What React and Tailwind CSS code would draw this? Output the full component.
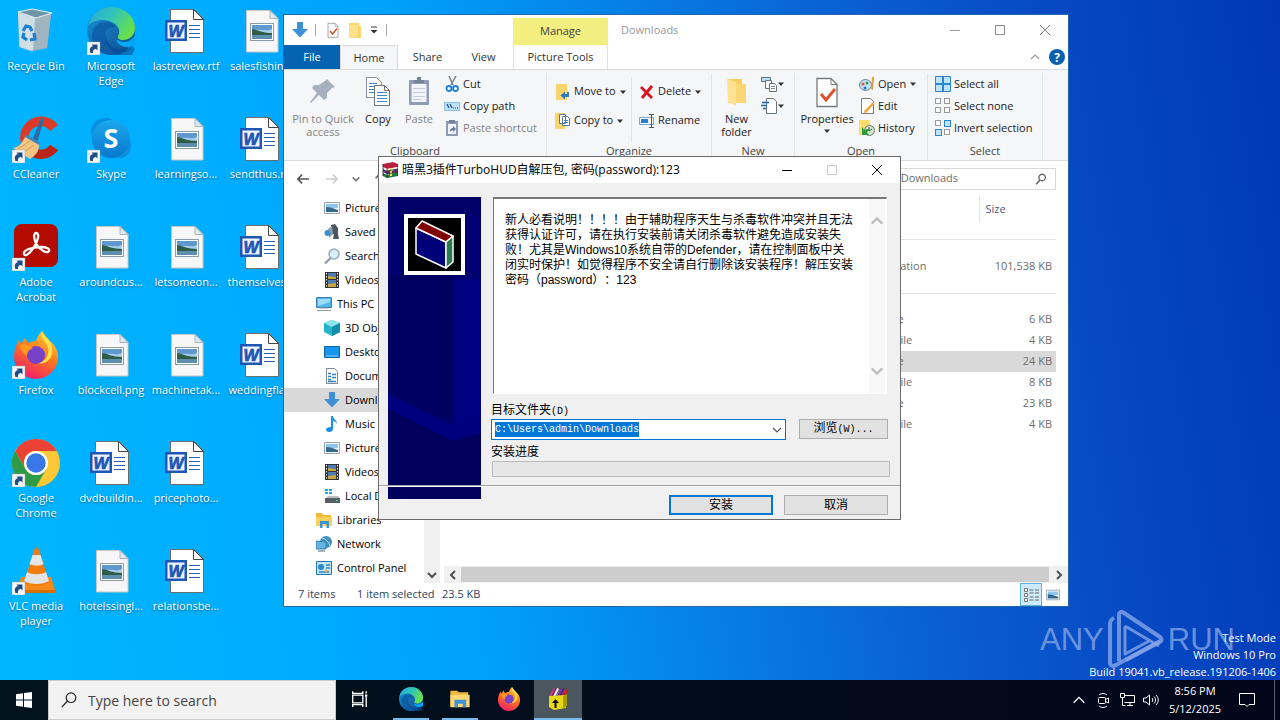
import React, { useEffect, useRef } from "react";

const UI = "font-['Open_Sans','Noto_Sans_CJK_SC',sans-serif]";
const SONG = "font-['Liberation_Sans','Noto_Sans_CJK_SC',sans-serif]";

/* ---------- shared icon frame ---------- */
function Svg({ box = 16, className = "size-4", children }) {
  return (
    <svg viewBox={`0 0 ${box} ${box}`} className={`shrink-0 ${className}`} fill="none" aria-hidden="true">
      {children}
    </svg>
  );
}

/* ---------- desktop icons ---------- */
const Shortcut = () => (
  <g>
    <rect x="0" y="35" width="13" height="13" fill="#f6f6f6" stroke="#9aa" strokeWidth=".5" />
    <path d="M3.500 46c-1.500-3.500-.5-6 2.500-7L4.500 37.500h6v6L9 42c-2 0-3.500 1.500-3 4z" fill="#1f4e86" />
  </g>
);
const RecycleBin = ({ className = "size-12" }) => (
  <Svg box={48} className={className}>
    <path d="M6 6l33 1-4 34-17 3-11-4z" fill="#c3ccd2" opacity=".85" />
    <path d="M23 9l16-1-4 33-14 3z" fill="#9eacb5" opacity=".7" />
    <path d="M6 5l14-3 20 4-16 5z" fill="#6f95a8" stroke="#e8f0f4" />
    <path d="M6 6l17 5-2 33-13-4z" fill="#dfe4e7" opacity=".75" />
    <path d="M11 24l3-5 4 1 2 4M22 26l1 6-5 1M15 33l-4-3 1-4" stroke="#1b7fd0" strokeWidth="3.200" />
  </Svg>
);
const EdgeArt = () => (
  <g>
    <circle cx="24" cy="24" r="24" fill="url(#edgeBlue)" />
    <path d="M1 19C4 7 13 0 24 0c14 0 24 10 24 21 0 8-6 12-12 12-4 0-6-2-5-4 2-3 2-8-3-12C20 11 7 12 1 19z" fill="url(#edgeGreen)" />
    <path d="M18 26c0 10 8 17 18 17 4 0 7-1 9-3-5 6-12 8-20 8-12-1-20-9-20-20 0-8 6-13 13-13 6 0 10 3 11 6-6-2-11 1-11 5z" fill="#0c59a4" opacity=".75" />
    <path d="M18 26c0 10 8 16 17 16 5 0 8-2 10-4l3 4-3 6H30c-8-5-13-13-12-22z" fill="#04498f" opacity=".55" />
    <path d="M31 33c5 4 12 2 17-4v9c-7 4-15 2-19-4z" fill="#03a5f6" />
    <defs>
      <linearGradient id="edgeBlue" x1="0" y1="0" x2="1" y2="1"><stop stopColor="#1593da" /><stop offset="1" stopColor="#114a8b" /></linearGradient>
      <linearGradient id="edgeGreen" x1="0" y1="0" x2="1" y2=".5"><stop stopColor="#2aa6dc" /><stop offset=".5" stopColor="#2fc4ba" /><stop offset="1" stopColor="#66e04c" /></linearGradient>
    </defs>
  </g>
);
const Edge = () => <Svg box={48} className="size-12"><EdgeArt /><Shortcut /></Svg>;
const WordDoc = () => (
  <Svg box={48} className="size-12">
    <path d="M8.500 2.500H32l9.500 9.500v33.500h-33z" fill="#fff" stroke="#6d6d6d" />
    <path d="M31.500 2.500v10h10z" fill="#fff" stroke="#444" />
    <path d="M27 18.500h11M27 22.500h11M27 26.500h11M27 30.500h11" stroke="#2b5fb4" />
    <rect x="3" y="13" width="22" height="21" fill="#1d56b4" />
    <rect x="5.500" y="15.500" width="17" height="16" fill="#eef3fb" />
    <text x="14" y="29.500" textAnchor="middle" fontSize="16" fontWeight="700" fontStyle="italic" fontFamily="Liberation Sans" fill="#1d56b4" stroke="#1d56b4" strokeWidth=".7">W</text>
  </Svg>
);
const PictureDoc = () => (
  <Svg box={48} className="size-12">
    <path d="M9.500 3.500H33l8 8v33.500H9.500z" fill="#f7f7f7" stroke="#c7c7c7" />
    <path d="M33 3.500v8h8z" fill="#dfe9ef" stroke="#a8b4bb" />
    <rect x="13.500" y="16.500" width="23" height="17" fill="#fff" stroke="#8f9ba5" />
    <path d="M15 18h20v14H15z" fill="#a8ceec" />
    <path d="M15 18h20v4c-6 3-12-1-20 2z" fill="#5f97cf" />
    <path d="M15 22c6 1 11 4 20 4v2H15z" fill="#2e5c46" />
    <path d="M15 28h20v4H15z" fill="#5d8fae" />
  </Svg>
);
const CCleaner = () => (
  <Svg box={48} className="size-12">
    <path d="M46 10A21 21 0 1 0 46 35l-8-5a12 12 0 1 1 0-14z" fill="#dc3a28" />
    <path d="M46 35A21 21 0 0 1 20 42l5-8c5 2 10 0 13-4z" fill="#b82618" />
    <path d="M29 3l3 1-7 24-5-2z" fill="#2b6da2" />
    <path d="M14 20l14 7-3 6-14-7z" fill="#3f86bb" />
    <path d="M13 22l14 8c0 7-4 11-9 14L1 33c6-1 9-5 12-11z" fill="#f2c583" />
    <path d="M6 34l12-8M11 38l11-8" stroke="#d89d55" />
    <Shortcut />
  </Svg>
);
const Skype = () => (
  <Svg box={48} className="size-12">
    <circle cx="18" cy="17" r="14" fill="#0a6fc4" opacity=".5" />
    <circle cx="32" cy="31" r="12" fill="#0c8fdc" />
    <circle cx="24" cy="24" r="19" fill="url(#skypeFill)" />
    <text x="24" y="33" textAnchor="middle" fontSize="27" fontWeight="700" fontFamily="Open Sans" fill="#fff">S</text>
    <Shortcut />
    <defs><linearGradient id="skypeFill" x1="0" y1="0" x2="0" y2="1"><stop stopColor="#1ba8ec" /><stop offset="1" stopColor="#0877cd" /></linearGradient></defs>
  </Svg>
);
const Acrobat = () => (
  <Svg box={48} className="size-12">
    <rect x="2" y="1" width="44" height="43" rx="8" fill="#b30b00" />
    <path d="M12 31c-1-4 8-7 17-7 6 0 9 2 8 4-2 3-9-1-12-6-3-4-4-12-1-12 4 0 2 8-2 14s-8 10-10 7z" stroke="#fff" strokeWidth="2.300" />
    <Shortcut />
  </Svg>
);
const FirefoxArt = () => (
  <g>
    <path d="M30 0c3 4 5 7 8 10 5 4 8 9 8 16a22 22 0 0 1-44 0c0-7 2-12 5-17l2 4 4-6 3 5c2-1 5-2 8-2 1-4 3-7 6-10z" fill="url(#ffFill)" />
    <path d="M30 0c-2 6 3 10 5 14 4 8-1 18-11 18 14 3 20-10 14-21-2-4-6-5-8-11z" fill="#ffe14a" />
    <circle cx="24" cy="24" r="9" fill="#7542c9" />
    <path d="M8 14c4-2 9 0 13 3-4 2-6 4-6 8-4-3-7-6-7-11z" fill="#ff9a1f" />
    <defs><linearGradient id="ffFill" x1=".8" y1="0" x2=".3" y2="1"><stop stopColor="#ffd83c" /><stop offset=".45" stopColor="#ff7a1c" /><stop offset="1" stopColor="#ee1c6b" /></linearGradient></defs>
  </g>
);
const Firefox = () => <Svg box={48} className="size-12"><FirefoxArt /><Shortcut /></Svg>;
const Chrome = () => (
  <Svg box={48} className="size-12">
    <circle cx="24" cy="24" r="24" fill="#fcc934" />
    <path d="M3.200 12A24 24 0 0 1 44.800 12H24a12 12 0 0 0-10.400 18z" fill="#ea4335" />
    <path d="M3.200 12A24 24 0 0 0 24 48l10.400-18A12 12 0 0 1 13.600 30z" fill="#2e9b46" />
    <circle cx="24" cy="24" r="12" fill="#fff" />
    <circle cx="24" cy="24" r="9.700" fill="#3b78e7" />
    <Shortcut />
  </Svg>
);
const Vlc = () => (
  <Svg box={48} className="size-12">
    <path d="M9 30h30l5 16H5z" fill="#f58a1a" />
    <path d="M5 43h39v3H5z" fill="#d96d05" />
    <path d="M23 1c2-1 3 0 4 2l10 32c-4 5-20 5-25 0z" fill="#f27c0b" />
    <path d="M20.500 8h8l3 9c-3 2-10 2-14 0z" fill="#e6e6e6" />
    <path d="M15 25c5 3 14 3 19 0l3 9c-6 4-19 4-25 0z" fill="#e2e2e2" />
    <Shortcut />
  </Svg>
);

const desktopItems = [
  ["Recycle Bin", RecycleBin], ["CCleaner", CCleaner], ["Adobe Acrobat", Acrobat], ["Firefox", Firefox], ["Google Chrome", Chrome], ["VLC media player", Vlc],
  ["Microsoft Edge", Edge], ["Skype", Skype], ["aroundcus...", PictureDoc], ["blockcell.png", PictureDoc], ["dvdbuildin...", WordDoc], ["hotelssingl...", PictureDoc],
  ["lastreview.rtf", WordDoc], ["learningso...", PictureDoc], ["letsomeon...", PictureDoc], ["machinetak...", PictureDoc], ["pricephoto...", WordDoc], ["relationsbe...", WordDoc],
  ["salesfishin...", PictureDoc], ["sendthus.rtf", WordDoc], ["themselves...", WordDoc], ["weddingfla...", WordDoc],
];

function DesktopIcons() {
  return (
    <ul className="grid w-max grid-flow-col grid-rows-[repeat(6,108px)] auto-cols-[75px]">
      {desktopItems.map(([label, Art]) => (
        <li key={label} className="flex flex-col items-center gap-[3px] pt-[7px] pr-[3px]">
          <Art />
          <span className="text-center text-[11px] leading-[15px] text-white [text-shadow:0_1px_2px_rgb(0_0_0/0.5)]">{label}</span>
        </li>
      ))}
    </ul>
  );
}

/* ---------- small explorer icons ---------- */
const DownArrow = ({ className = "size-4" }) => (
  <Svg className={className}><path d="M5 0h6v7h5l-8 8.500L0 7h5z" fill="#3c8fd8" /></Svg>
);
const FolderIcon = ({ className = "size-4" }) => (
  <Svg className={className}><path d="M2 1h10v3h2v12H2z" fill="#fbd56b" /><path d="M2 3h9v11l-5 2H2z" fill="#fde08a" /></Svg>
);
const BigFolderIcon = () => (
  <Svg box={32} className="size-8"><path d="M7 3h14v6h4v18H7z" fill="#f7cd62" /><path d="M6 3l9 3v24l-8-4z" fill="#fde293" /><path d="M15 8h10v19H15z" fill="#fbd675" /></Svg>
);
const CheckPage = ({ className = "size-4" }) => (
  <Svg box={32} className={className}>
    <path d="M6 2.500h14l6 6v22H6z" fill="#fff" stroke="#7a7a7a" strokeWidth="1.300" />
    <path d="M20 2.500v6h6" stroke="#7a7a7a" />
    <path d="M10 18l5 6 9-11" stroke="#d9532c" strokeWidth="3" />
  </Svg>
);
const PinIcon = () => (
  <Svg box={32} className="size-8"><path d="M20 3l8 8-3 1-5 5v5l-3 2-5-5-8 8-1-1 7-9-5-5 2-3h5l6-4z" fill="#a6b0bf" /></Svg>
);
const CopyIcon = () => (
  <Svg box={32} className="size-8">
    <path d="M4.500 1.500h10l5 5v15h-15z" fill="#fff" stroke="#8a9099" />
    <path d="M7 7.500h8M7 10.500h8M7 13.500h6M7 16.500h6" stroke="#3d86cf" />
    <path d="M12.500 9.500h10l5 5v15h-15z" fill="#fff" stroke="#6e747d" />
    <path d="M22.500 9.500v5h5" stroke="#6e747d" />
    <path d="M15 16.500h10M15 19.500h10M15 22.500h10M15 25.500h10" stroke="#3d86cf" />
  </Svg>
);
const PasteIcon = () => (
  <Svg box={32} className="size-8">
    <rect x="6" y="4" width="20" height="25" rx="1" fill="#8d9bb5" />
    <path d="M8.500 8h15v18h-15z" fill="#f1f4fa" />
    <path d="M11 7V4h3V1h4v3h3v3z" fill="#76839c" />
    <path d="M10 12.500h12M10 16.500h12M10 20.500h12M10 23.500h8" stroke="#c2cbe0" />
  </Svg>
);
const CutIcon = () => (
  <Svg><path d="M5 0l4 9M12 0L7 9" stroke="#7c8086" strokeWidth="1.500" /><circle cx="5" cy="12.500" r="2.500" stroke="#1f84cf" strokeWidth="1.800" /><circle cx="11.500" cy="12.500" r="2.500" stroke="#1f84cf" strokeWidth="1.800" /></Svg>
);
const CopyPathIcon = () => (
  <Svg><rect x=".5" y="4.500" width="15" height="8" fill="#bfe1f8" stroke="#8fc1e6" /><path d="M3 6l2 4M6 6l2 4M9 10h1M11 10h1M13 10h1" stroke="#184d80" strokeWidth="1.200" /></Svg>
);
const PasteShortcutIcon = () => (
  <Svg><path d="M2 1h12v15H2z" fill="#8d9bb5" /><path d="M4 4h8v10H4z" fill="#f1f4fa" /><path d="M6 12c0-3 1-4 3-4V6l3 3-3 3v-2c-1 0-2 1-3 2z" fill="#62789f" /><path d="M5 0h6v3H5z" fill="#76839c" /></Svg>
);
const MoveIcon = () => (
  <Svg><path d="M1 0h11v16H1z" fill="#fbd56b" /><path d="M14 8v5h-4v2.500L5.500 11.500l4.500-4V10h2V8z" fill="#2f7cc6" /></Svg>
);
const CopyToIcon = () => (
  <Svg><path d="M0 0h10v16H0z" fill="#fbd56b" /><path d="M4.500 1.500h6v9h-6zM7.500 3.500h5l2 2v7h-7z" fill="#fff" stroke="#58779c" /><path d="M9 7.500h4M9 9.500h4" stroke="#3d86cf" /></Svg>
);
const DeleteIcon = () => <Svg><path d="M2 3l11 11M13 2L3 14" stroke="#d8121f" strokeWidth="2.800" /></Svg>;
const RenameIcon = () => (
  <Svg><path d="M.5 4.500h14v7H.5z" fill="#fff" stroke="#7fa6cd" /><path d="M2 6h7v4H2z" fill="#2a80cc" /><path d="M10 1.500h5M10 14.500h5M12.500 2v12" stroke="#555" /></Svg>
);
const NewItemIcon = () => (
  <Svg><path d="M.5 1.500h9v4h-9z" fill="#b8e0ee" stroke="#56717f" /><path d="M4.500 4.500h6v8h-6z" fill="#fff" stroke="#66727c" /><path d="M8.500 7.500h5l2 2v6h-7z" fill="#fff" stroke="#66727c" /><path d="M10 10.500h4M10 12.500h4" stroke="#888" /></Svg>
);
const EasyAccessIcon = () => (
  <Svg><path d="M5.500.5h7l3 3v12h-10z" fill="#fff" stroke="#66727c" /><path d="M1 4.500h7M0 7.500h6M2 10.500h3" stroke="#1b66ad" strokeWidth="1.400" /></Svg>
);
const PaletteIcon = () => (
  <Svg><ellipse cx="6.500" cy="9" rx="6" ry="5.500" fill="#bfe1f2" stroke="#70848f" /><circle cx="4" cy="8" r="1.500" fill="#e0524a" /><circle cx="8" cy="7" r="1.500" fill="#3c9a4a" /><circle cx="6" cy="12" r="1.500" fill="#2a72c9" /><path d="M13 1h2l-1 13-2-1z" fill="#e59b3b" /></Svg>
);
const EditIcon = () => (
  <Svg><path d="M2.500.5h9l3 3v12h-12z" fill="#fff" stroke="#7b7b7b" /><path d="M14 4l1.500 1.500-8 9L5 15l.5-2.500z" fill="#f2a73a" /></Svg>
);
const HistoryIcon = () => (
  <Svg><path d="M0 0h11v15H0z" fill="#fbdb6c" /><circle cx="10.500" cy="10.500" r="5" fill="#cfe6cf" stroke="#707070" /><path d="M10 7v4l3-2" stroke="#555" /><path d="M3 7v8h7l-2-2.500c1-1.500 1-2 3-3-3-1-4 0-5.500 1z" fill="#24a03a" /></Svg>
);
const Squares = ({ on }) => (
  <Svg>
    {[[0, 0], [9, 0], [0, 9], [9, 9]].map(([x, y], i) => (
      <rect key={i} x={x + 0.5} y={y + 0.5} width={on[i] ? 6 : 5} height={on[i] ? 6 : 5} fill={on[i] ? "#bfe3fb" : "#fff"} stroke={on[i] ? "#2a86d0" : "#9a9a9a"} />
    ))}
  </Svg>
);
const Grid4 = () => (
  <Svg><path d="M.5.500h15v15H.5z" fill="#bfe3fb" stroke="#2a86d0" /><path d="M8 0v16M0 8h16" stroke="#2a86d0" strokeWidth="2" /></Svg>
);
const Caret = () => <Svg box={8} className="size-2"><path d="M1 2.500h6L4 6z" fill="#333" /></Svg>;
const Chevron = ({ d, className = "size-3", stroke = "#505050", w = 2 }) => (
  <Svg box={12} className={className}><path d={d} stroke={stroke} strokeWidth={w} /></Svg>
);
const UP = "M2 8l4-4 4 4";
const DOWN = "M2 4l4 4 4-4";
const LEFT = "M8 2L4 6l4 4";
const RIGHT = "M4 2l4 4-4 4";

const PictureIcon = ({ className = "size-4" }) => <Svg className={className}><path d="M.5 2.500h15v11H.5z" fill="#fff" stroke="#8fa3b3" /><path d="M2 4h12v4H2z" fill="#8fc5ee" /><path d="M2 7c4 0 7 1 12 3v2H2z" fill="#35678f" /></Svg>;
const SavedIcon = () => <Svg><path d="M7 1l4-1 3 4v6l1 5H9l1-5-3 1z" fill="#4c5660" /><path d="M4 5l4-3 1 8-4 4z" fill="#8ca1b0" /><circle cx="3.500" cy="9" r="3" fill="#3d8fd0" /></Svg>;
const SearchesIcon = () => <Svg><circle cx="10" cy="6" r="5" fill="#d8eefb" stroke="#97adbb" strokeWidth="1.500" /><path d="M6.500 10L1 15.500" stroke="#8b99a4" strokeWidth="2.200" /></Svg>;
const VideoIcon = () => <Svg><path d="M1 0h14v16H1z" fill="#333" /><path d="M4 1h8v6H4zM4 8h8v7H4z" fill="#4c7bb5" /><path d="M4 4l8 1v2H4zM4 12l8-1v4H4z" fill="#c5a73d" /><path d="M2.500 1v14M13.500 1v14" stroke="#eee" strokeDasharray="1.500 1.500" /></Svg>;
const PcIcon = () => <Svg><path d="M.5 1.500h15v10H.5z" fill="#52b6ee" stroke="#3a7fae" /><path d="M2 3h12v3L2 10z" fill="#9bdcf8" /><path d="M4 12h8M1 14.500h14" stroke="#8b9aa3" /></Svg>;
const CubeIcon = () => <Svg><path d="M8 0l8 3v9l-8 4-8-4V3z" fill="#27b3c9" /><path d="M8 0l8 3-8 4-8-4z" fill="#8fe5ee" /><path d="M8 7l8-4v9l-8 4z" fill="#1190ab" /></Svg>;
const DesktopIcon = () => <Svg><path d="M.5 2.500h15v11H.5z" fill="#1595ee" stroke="#0d62a8" /><path d="M2 12h12" stroke="#8ed1fb" /></Svg>;
const DocsIcon = () => <Svg><path d="M2.500.5h8l3 3v12h-11z" fill="#fff" stroke="#7d8a94" /><path d="M4 5.500h3M8 6.500h4M4 8.500h3M8 9.500h4M4 11.500h3M4 13.500h8" stroke="#2e7cc4" strokeWidth="1.400" /></Svg>;
const MusicIcon = () => <Svg><path d="M7 0h2c0 3 4 4 4 8-1-2-2-3-4-3v8c0 2-2 3-4 3s-3-1-3-2.500S4 11 7 11z" fill="#1b8fe0" /></Svg>;
const DiskIcon = () => <Svg><path d="M1 1h3v2H1zM5 1h3v2H5zM1 4h3v2H1zM5 4h3v2H5z" fill="#1aa9e8" /><path d="M2 10l2-2h10l2 2z" fill="#b9c0c5" /><path d="M1 10h15v5H1z" fill="#555e65" /><path d="M12 12.500h2" stroke="#5fe36d" /></Svg>;
const LibIcon = () => <Svg><path d="M0 1h6l1 2h8v10H0z" fill="#f3b93a" /><path d="M0 5h16v9H0z" fill="#fbd05a" /><path d="M4 9h9v7h-2.500v-4h-4v4H4z" fill="#3e93d6" /></Svg>;
const NetIcon = () => <Svg><circle cx="10" cy="6" r="6" fill="#3f8fc4" /><path d="M6 2c4 1 7 4 8 8" stroke="#b4e0f5" /><path d="M0 5l10 1v7H0z" fill="#64b5e6" stroke="#3b7fae" /><path d="M2 15h7" stroke="#8b9aa3" strokeWidth="1.500" /></Svg>;
const ControlIcon = () => <Svg><path d="M.5 1.500h15v13H.5z" fill="#bfe3f7" stroke="#1f78b5" /><circle cx="5" cy="7" r="3" fill="#2b88cc" /><path d="M10 5h4M10 8h4M3 12h10" stroke="#2b88cc" strokeWidth="1.500" /><circle cx="10" cy="11" r="1.500" fill="#f2a73a" /></Svg>;

/* ---------- explorer window ---------- */
function RibbonGroup({ label, className, children }) {
  return (
    <section className={`flex shrink-0 flex-col border-r border-[#e2e3e4] ${className}`} aria-label={label}>
      <div className="flex grow">{children}</div>
      <h2 className="pb-[2px] text-center leading-[15px] text-[#444]">{label}</h2>
    </section>
  );
}
function BigButton({ icon, label, className, caret, muted }) {
  return (
    <button className={`flex flex-col items-center pt-[3px] leading-[13px] ${muted ? "text-[#838383]" : "text-[#222]"} ${className}`}>
      {icon}
      <span className="mt-1">{label}</span>
      {caret && <span className="mt-0.5"><Caret /></span>}
    </button>
  );
}
function SmallButton({ icon, label, caret, muted, tall }) {
  return (
    <button className={`flex items-center whitespace-nowrap ${label ? "gap-[3px]" : ""} ${tall ? "h-[29px]" : "h-[22px]"} ${muted ? "text-[#838383]" : "text-[#222]"}`} aria-label={label ? undefined : "More"}>
      {icon}
      {label && <span>{label}</span>}
      {caret && <Caret />}
    </button>
  );
}

function Ribbon() {
  return (
    <div className="flex h-[92px] border-y border-[#dadbdc] bg-[#f5f6f7] pt-[3px]">
      <RibbonGroup label="Clipboard" className="w-[263px]">
        <BigButton icon={<PinIcon />} label={<>Pin to Quick<br />access</>} className="w-[78px]" muted />
        <BigButton icon={<CopyIcon />} label="Copy" className="w-[32px]" />
        <BigButton icon={<PasteIcon />} label="Paste" className="w-[50px]" muted />
        <div className="flex flex-col">
          <SmallButton icon={<CutIcon />} label="Cut" />
          <SmallButton icon={<CopyPathIcon />} label="Copy path" />
          <SmallButton icon={<PasteShortcutIcon />} label="Paste shortcut" muted />
        </div>
      </RibbonGroup>
      <RibbonGroup label="Organize" className="w-[165px]">
        <div className="mt-1 flex w-[85px] flex-col border-r border-[#e2e3e4] pl-2">
          <SmallButton icon={<MoveIcon />} label="Move to" caret tall />
          <SmallButton icon={<CopyToIcon />} label="Copy to" caret tall />
        </div>
        <div className="mt-1 flex flex-col pl-[7px]">
          <SmallButton icon={<DeleteIcon />} label="Delete" caret tall />
          <SmallButton icon={<RenameIcon />} label="Rename" tall />
        </div>
      </RibbonGroup>
      <RibbonGroup label="New" className="w-[83px]">
        <BigButton icon={<BigFolderIcon />} label={<>New<br />folder</>} className="w-[49px]" />
        <div className="flex flex-col">
          <SmallButton icon={<NewItemIcon />} caret />
          <SmallButton icon={<EasyAccessIcon />} caret />
        </div>
      </RibbonGroup>
      <RibbonGroup label="Open" className="w-[133px]">
        <BigButton icon={<CheckPage className="size-8" />} label="Properties" className="w-[64px]" caret />
        <div className="flex flex-col">
          <SmallButton icon={<PaletteIcon />} label="Open" caret />
          <SmallButton icon={<EditIcon />} label="Edit" />
          <SmallButton icon={<HistoryIcon />} label="History" />
        </div>
      </RibbonGroup>
      <RibbonGroup label="Select" className="w-[115px]">
        <div className="flex flex-col pl-[7px]">
          <SmallButton icon={<Grid4 />} label="Select all" />
          <SmallButton icon={<Squares on={[0, 0, 0, 0]} />} label="Select none" />
          <SmallButton icon={<Squares on={[0, 1, 1, 0]} />} label="Invert selection" />
        </div>
      </RibbonGroup>
    </div>
  );
}

const navItems = [
  ["Pictures", PictureIcon, 2], ["Saved Games", SavedIcon, 2], ["Searches", SearchesIcon, 2], ["Videos", VideoIcon, 2],
  ["This PC", PcIcon, 1], ["3D Objects", CubeIcon, 2], ["Desktop", DesktopIcon, 2], ["Documents", DocsIcon, 2],
  ["Downloads", DownArrow, 2], ["Music", MusicIcon, 2], ["Pictures", PictureIcon, 2], ["Videos", VideoIcon, 2],
  ["Local Disk (C:)", DiskIcon, 2], ["Libraries", LibIcon, 1], ["Network", NetIcon, 1], ["Control Panel", ControlIcon, 1],
];
const files = [
  ["INI File", "6 KB"], ["PNG File", "4 KB"], ["INI File", "24 KB"], ["PNG File", "8 KB"], ["INI File", "23 KB"], ["PNG File", "4 KB"],
];

function FileRow({ type, size, selected }) {
  return (
    <tr className={`h-[21px] text-[#6d6d6d] ${selected ? "bg-[#d9d9d9]" : ""}`}>
      <td />
      <td className="pl-[13px]">{type}</td>
      <td className="pr-1 text-right whitespace-nowrap">{size}</td>
    </tr>
  );
}

function Explorer() {
  return (
    <main className="absolute top-[14px] left-[283px] flex w-[786px] flex-col border border-[#2166ae] bg-white text-[11px] text-black">
      <header className="flex h-[30px]">
        <div className="flex w-[229px] items-center pl-2">
          <DownArrow />
          <span className="mx-[7px] h-3 w-px bg-[#aaa]" />
          <span className="ml-0.5"><CheckPage /></span>
          <span className="ml-[6px]"><FolderIcon /></span>
          <span className="ml-[6px]">
            <Svg box={10} className="size-2.5"><path d="M2 2h6" stroke="#333" /><path d="M1.500 5h7L5 8.500z" fill="#333" /></Svg>
          </span>
          <span className="ml-[7px] h-3 w-px bg-[#aaa]" />
        </div>
        <div className="mt-[3px] flex w-[95px] items-center justify-center bg-[#f3ee80] text-[#444]">Manage</div>
        <h1 className="flex grow items-center pl-[13px] text-[#999]">Downloads</h1>
        <div className="flex">
          <button className="grid w-[45px] place-items-center" aria-label="Minimize"><Svg box={12} className="size-3"><path d="M1 6.500h10" stroke="#999" /></Svg></button>
          <button className="grid w-[45px] place-items-center" aria-label="Maximize"><Svg box={12} className="size-3"><path d="M1.500 1.500h9v9h-9z" stroke="#888" /></Svg></button>
          <button className="grid w-[46px] place-items-center" aria-label="Close"><Svg box={12} className="size-3"><path d="M1 1l10 10M11 1L1 11" stroke="#888" /></Svg></button>
        </div>
      </header>
      <nav className="flex h-6 items-stretch text-[#333]">
        <button className="w-14 bg-[#0563b1] text-white">File</button>
        <button className="-mb-px w-[58px] border border-b-0 border-[#dadbdc] bg-[#f5f6f7]">Home</button>
        <button className="w-[59px]">Share</button>
        <button className="w-[53px]">View</button>
        <button className="ml-[3px] w-[95px] border-x border-[#e2e2e2] whitespace-nowrap">Picture Tools</button>
        <div className="flex grow items-center justify-end gap-2 pr-[3px]">
          <Chevron d={UP} stroke="#999" w={1.2} />
          <button className="grid size-4 place-items-center rounded-full bg-[#0a5fae] text-[12px] font-bold text-white" aria-label="Help">?</button>
        </div>
      </nav>
      <Ribbon />
      <div className="flex h-[35px] items-center">
        <div className="flex grow items-center gap-3 pl-3">
          <Svg className="size-[14px]"><path d="M15 8H2M7 3L2 8l5 5" stroke="#555" strokeWidth="1.800" /></Svg>
          <Svg className="ml-[3px] size-[14px]"><path d="M1 8h13M9 3l5 5-5 5" stroke="#ccc" strokeWidth="1.800" /></Svg>
          <Chevron d={DOWN} className="size-2.5" stroke="#777" />
          <Svg className="size-[14px]"><path d="M8 15V2M3 7l5-5 5 5" stroke="#666" strokeWidth="1.800" /></Svg>
        </div>
        <label className="mr-3 flex h-[22px] w-[200px] items-center border border-[#d9d9d9] pr-2 pl-[6px]">
          <input className="w-0 grow bg-transparent outline-none placeholder:text-[#6d6d6d]" placeholder="Search Downloads" aria-label="Search Downloads" />
          <Svg className="size-3"><circle cx="9.500" cy="6" r="4.300" stroke="#666" strokeWidth="1.800" /><path d="M6.500 9.500L1.500 15" stroke="#666" strokeWidth="2" /></Svg>
        </label>
      </div>
      <div className="flex h-[387px]">
        <ul className="w-[140px] overflow-hidden">
          {navItems.map(([label, Icon, level], i) => (
            <li key={i} className={`flex h-6 items-center gap-[5px] whitespace-nowrap ${level === 2 ? "pl-10" : "pl-8"} ${label === "Downloads" ? "bg-[#d9d9d9]" : ""}`}>
              <Icon />
              <span>{label}</span>
            </li>
          ))}
        </ul>
        <div className="flex w-4 items-end justify-center bg-[#f0f0f0] pb-[2px]"><Chevron d={DOWN} /></div>
        <div className="flex grow flex-col pl-1">
          <table className="ml-0 w-[612px] table-fixed border-collapse">
            <colgroup><col /><col className="w-[123px]" /><col className="w-[77px]" /></colgroup>
            <thead>
              <tr className="h-[26px] text-left text-[#4c607a]">
                <th aria-label="Name" />
                <th aria-label="Type" />
                <th className="border-l border-[#e5e5e5] pl-[6px] font-normal">Size</th>
              </tr>
            </thead>
            <tbody>
              <tr className="h-[34px]"><td colSpan={3}><hr className="border-[#e2e2e2]" /></td></tr>
              <FileRow type="Application" size="101,538 KB" />
              <tr className="h-8"><td colSpan={3}><hr className="border-[#e2e2e2]" /></td></tr>
              {files.map(([type, size], i) => <FileRow key={i} type={type} size={size} selected={i === 2} />)}
            </tbody>
          </table>
          <div className="mt-auto flex h-[17px] items-center bg-[#f0f0f0]">
            <span className="grid w-[17px] place-items-center"><Chevron d={LEFT} /></span>
            <span className="h-[15px] grow bg-[#cdcdcd]" />
            <span className="grid w-[19px] place-items-center"><Chevron d={RIGHT} /></span>
          </div>
        </div>
      </div>
      <footer className="flex h-[23px] items-center pl-[14px] text-[#2b3f5c]">
        <span className="w-[59px]">7 items</span>
        <span className="w-[85px] whitespace-nowrap">1 item selected</span>
        <span>23.5 KB</span>
        <div className="ml-auto flex items-center self-stretch pr-1">
          <button className="grid w-[22px] place-items-center self-stretch border border-[#5fb2dc] bg-[#cdeaf8]" aria-label="Details view">
            <Svg><path d="M1.500 1.500h3v3h-3zM1.500 6.500h3v3h-3zM1.500 11.500h3v3h-3z" fill="#fff" stroke="#777" /><path d="M6.500 3h4M12 3h4M6.500 6h4M12 6h4M6.500 10h4M12 10h4M6.500 13h4M12 13h4" stroke="#666" /></Svg>
          </button>
          <button className="grid w-[22px] place-items-center" aria-label="Thumbnail view"><PictureIcon className="size-[14px]" /></button>
        </div>
      </footer>
    </main>
  );
}

/* ---------- installer dialog ---------- */
const BooksIcon = () => (
  <Svg>
    <path d="M1 2l10-2 5 2v3L5 7 1 5z" fill="#b8203c" /><path d="M1 5l4 2 11-2v2L5 9 1 7z" fill="#f0f0e8" />
    <path d="M1 7l4 2 11-2v3L5 12l-4-2z" fill="#5c2a80" /><path d="M1 11l4 2 11-3v4L5 16l-4-2z" fill="#1c7a3c" />
    <path d="M9 6l3 3h-2v5H8V9H6z" fill="#f4e04a" /><path d="M1 2v12M5 7v9M16 3v11M5 12l11-2M5 9l11-2" stroke="#222" strokeWidth=".8" />
  </Svg>
);
const Mono = ({ children }) => <span className="font-['Liberation_Mono',monospace] text-[10px]">{children}</span>;

function Installer() {
  const pathRef = useRef(null);
  useEffect(() => {
    pathRef.current?.focus();
    pathRef.current?.select();
  }, []);
  return (
    <section role="dialog" aria-labelledby="dlg-title" className={`absolute top-[156px] left-[378px] flex w-[523px] flex-col border border-[#6b6b6b] bg-[#f0f0f0] text-[12px] text-black ${SONG}`}>
      <header className={`flex h-[26px] items-center bg-white pl-[3px] ${UI}`}>
        <BooksIcon />
        <h2 id="dlg-title" className="ml-1 grow whitespace-nowrap">暗黑3插件TurboHUD自解压包, 密码(password):123</h2>
        <button className="grid h-full w-[45px] place-items-center" aria-label="Minimize"><Svg box={12} className="size-3"><path d="M1 6.500h10" stroke="#000" /></Svg></button>
        <button className="grid h-full w-[45px] place-items-center" disabled aria-label="Maximize"><Svg box={12} className="size-3"><path d="M1.500 1.500h9v9h-9z" stroke="#ccc" /></Svg></button>
        <button className="grid h-full w-[46px] place-items-center" aria-label="Close"><Svg box={12} className="size-3"><path d="M1 1l10 10M11 1L1 11" stroke="#000" /></Svg></button>
      </header>
      <div className="flex gap-[10px] pt-[14px] pr-3 pb-[4px] pl-[9px]">
        <svg viewBox="0 0 93 302" className="h-[302px] w-[93px] shrink-0" aria-hidden="true">
          <rect width="93" height="302" fill="#000070" />
          <path d="M0 78h66v148L0 200z" fill="#000060" /><path d="M66 82h27v150l-27-6z" fill="#000082" />
          <path d="M0 196l62 32 31-10v18l-27 8-66-32z" fill="#00007e" /><path d="M0 212l64 32 29-8v66H0z" fill="#00005c" />
          <path d="M0 0h93v16H0z" fill="#000068" />
          <rect x="16" y="17" width="61" height="61" fill="#fff" /><rect x="20" y="21" width="53" height="53" fill="#000" />
          <g stroke="#fff" strokeWidth="1.500" strokeLinejoin="round">
            <path d="M28 31l30 14v26L28 57z" fill="#000078" /><path d="M28 31l6-7 31 15-7 6z" fill="#800000" /><path d="M58 45l7-6v26l-7 6z" fill="#2a7a4c" />
          </g>
        </svg>
        <div className="flex grow flex-col">
          <div className="mr-px ml-[2px] flex h-[197px] justify-between border border-t-2 border-[#fff] border-t-[#777] border-l-[#777] bg-white pr-px">
            <p className="pt-[14px] pl-[11px] leading-[15px] whitespace-nowrap [text-spacing-trim:space-all]">
              新人必看说明！！！！由于辅助程序天生与杀毒软件冲突并且无法<br />
              获得认证许可，请在执行安装前请关闭杀毒软件避免造成安装失<br />
              败！尤其是Windows10系统自带的Defender，请在控制面板中关<br />
              闭实时保护！如觉得程序不安全请自行删除该安装程序！解压安装<br />
              密码（password）：123
            </p>
            <div className="flex w-4 flex-col items-center justify-between bg-[#f8f8f8] py-[14px]">
              <Chevron d={UP} className="size-4" stroke="#bdbdbd" w={1.8} />
              <Chevron d={DOWN} className="size-4" stroke="#bdbdbd" w={1.8} />
            </div>
          </div>
          <label htmlFor="dest" className="mt-[9px] leading-[15px]">目标文件夹<Mono>(D)</Mono></label>
          <div className="flex items-start justify-between">
            <div className="flex h-[21px] w-[295px] items-center border border-[#0078d7] bg-white pr-[2px]">
              <input
                id="dest"
                ref={pathRef}
                defaultValue={"C:\\Users\\admin\\Downloads"}
                className="w-0 grow pl-[3px] font-['Liberation_Mono',monospace] text-[10px] outline-none selection:bg-[#0078d7] selection:text-white"
              />
              <button aria-label="Open list"><Chevron d={DOWN} stroke="#555" w={1.2} /></button>
            </div>
            <button className="h-5 w-[89px] border border-[#adadad] bg-[#e1e1e1] leading-[15px]">浏览<Mono>(W)...</Mono></button>
          </div>
          <p className="mt-[5px] leading-[15px]" id="prog">安装进度</p>
          <div role="progressbar" aria-labelledby="prog" aria-valuenow={0} className="mt-[1px] -mr-[2px] ml-px h-4 border border-[#bcbcbc] bg-[#e6e6e6]" />
          <div className="mt-[18px] flex justify-end gap-[11px]">
            <button className="h-5 w-[104px] border-2 border-[#0078d7] bg-[#e1e1e1] leading-[15px]">安装</button>
            <button className="h-5 w-[104px] border border-[#adadad] bg-[#e1e1e1] leading-[15px]">取消</button>
          </div>
        </div>
      </div>
      <hr className="absolute inset-x-0 bottom-8 h-[2px] border-t border-[#a0a0a0] bg-white" />
    </section>
  );
}

/* ---------- watermark & taskbar ---------- */
function Watermark() {
  return (
    <div className="absolute right-[4px] bottom-0 h-[70px] w-[236px]">
      <div className="flex items-center text-[31px] leading-[60px] text-[#86a5e6]/80 font-['Liberation_Sans',sans-serif]">
        <span>ANY</span>
        <svg viewBox="0 0 56 60" className="mx-1 h-[60px] w-[56px]" fill="none" stroke="currentColor" strokeWidth="4" strokeLinejoin="round" aria-hidden="true">
          <path d="M6 8c-4 2-4 4-4 8v36c0 4 3 5 6 3l44-24" />
          <path d="M11 5v46M11 5c0-3 3-4 5-2l36 24c2 2 2 4 0 5L18 50" />
          <path d="M17 16l34 20M17 16v28l26-14" strokeWidth="3" />
        </svg>
        <span>RUN</span>
      </div>
      <div className="absolute right-0 bottom-0 text-right text-[11px] leading-[17px] whitespace-nowrap text-white">
        <p>Test Mode</p><p>Windows 10 Pro</p><p>Build 19041.vb_release.191206-1406</p>
      </div>
    </div>
  );
}

function TaskButton({ label, active, running, children }) {
  return (
    <button aria-label={label} className={`flex w-12 flex-col items-center ${active ? "bg-[#4a575f]" : ""}`}>
      <span className="grid grow place-items-center">{children}</span>
      <span className={`h-[2px] ${active ? "w-full" : "w-9"} ${running ? "bg-[#76b9ed]" : ""}`} />
    </button>
  );
}

function Taskbar() {
  return (
    <footer className="flex h-10 bg-linear-to-r from-[#02131e] to-[#02061a] text-white">
      <button className="grid w-12 place-items-center" aria-label="Start">
        <Svg><path d="M0 2.200l7-1v6.300H0zM8 1l8-1v7.500H8zM0 8.500h7v6.300l-7-1zM8 8.500h8V16l-8-1z" fill="#fff" /></Svg>
      </button>
      <label className="flex w-72 items-center gap-[11px] border border-[#ccc] bg-[#f2f2f2] pl-3">
        <Svg className="size-4"><circle cx="10" cy="5.700" r="4.800" stroke="#222" strokeWidth="1.200" /><path d="M6.500 9L.8 15.200" stroke="#222" strokeWidth="1.200" /></Svg>
        <input className="w-0 grow bg-transparent text-[14px] outline-none placeholder:text-[#444]" placeholder="Type here to search" aria-label="Type here to search" />
      </label>
      <div className="flex">
        <TaskButton label="Task View"><Svg className="size-[18px]"><path d="M1.500 4.500h9v7h-9zM1.500 1v2h9V1M1.500 15v-2h9v2M13.500 1v2M13.500 6v9" stroke="#fff" strokeWidth="1.200" /><path d="M12.500 4h2v2h-2z" fill="#fff" /></Svg></TaskButton>
        <div className="ml-[3px] flex gap-px">
          <TaskButton label="Edge" running><Svg box={48} className="size-6"><EdgeArt /></Svg></TaskButton>
          <TaskButton label="File Explorer" running><Svg className="size-[22px]"><path d="M1 2h5l1 1h7v10H1z" fill="#f0b93c" /><path d="M1 5h14v9H1z" fill="#fcd872" /><path d="M4 8.500h8.500V14H10v-2.500H6.500V14H4z" fill="#3e93d6" /></Svg></TaskButton>
          <TaskButton label="Firefox"><Svg box={48} className="size-6"><FirefoxArt /></Svg></TaskButton>
          <TaskButton label="Installer" active running>
            <Svg box={24} className="size-6">
              <path d="M3 9L8 1l3 1-4 8z" fill="#d23b8e" /><path d="M7 10l4-9 3 1-4 9z" fill="#e8e8ff" /><path d="M11 10l4-9 3 1-3 9z" fill="#7a2fb4" /><path d="M15 10l4-8 3 1-3 8z" fill="#c22424" />
              <path d="M6 9l4-8M10 9l4-8M14 9l4-8" stroke="#222" strokeWidth=".8" />
              <path d="M3 9l17-1v13l-12 2-5-3z" fill="#e8d816" /><path d="M17 9l4-2v12l-4 3z" fill="#a89a08" />
              <path d="M8.500 21v-5H6l3.500-4 3.500 4h-2.500v5z" fill="#111" />
            </Svg>
          </TaskButton>
        </div>
      </div>
      <div className="ml-auto flex items-center">
        <div className="flex items-center gap-2">
          <Chevron d={UP} className="size-4" stroke="#fff" w={1} />
          <Svg className="size-4"><rect x="3.500" y="5.500" width="7" height="6" rx="1" stroke="#fff" /><path d="M10.500 7.500l3-1.500v5l-3-1.500M4 3c2-2 6-2 8 0M4 14c2 2 6 2 8 0" stroke="#fff" /></Svg>
          <Svg className="size-4"><path d="M5.500 3.500h10v7h-10M8 13.500h6M11 10.500v3M1.500 1.500h4v4h-4zM3.500 5.500v8h3" stroke="#fff" /></Svg>
          <Svg className="size-4"><path d="M.5 6h2.500l3.500-3v10L3 10H.5zM9 6c1 1 1 3 0 4M11 4.500c2 2 2 5 0 7M13 3c3 3 3 7 0 10" stroke="#fff" /></Svg>
        </div>
        <time className="ml-2 flex w-[56px] flex-col text-center text-[11px] leading-[18px] whitespace-nowrap"><span>8:56 PM</span><span>5/12/2025</span></time>
        <button className="grid w-12 place-items-center" aria-label="Notifications"><Svg className="size-4"><path d="M.5 1.500h15v11H10l-2 2-2-2H.5z" stroke="#fff" /></Svg></button>
        <span className="ml-[3px] h-10 w-[6px] border-l border-[#5a6070]" />
      </div>
    </footer>
  );
}

export default function App() {
  return (
    <div className={`flex min-h-screen flex-col overflow-hidden ${UI}`}>
      <div className="relative grow bg-[linear-gradient(82deg,#00b6ff_0%,#00acff_22%,#00a0f8_36%,#0680e4_52%,#0a60d2_68%,#0648c2_84%,#0038b4_100%)]">
        <DesktopIcons />
        <Watermark />
        <Explorer />
        <Installer />
      </div>
      <Taskbar />
    </div>
  );
}
